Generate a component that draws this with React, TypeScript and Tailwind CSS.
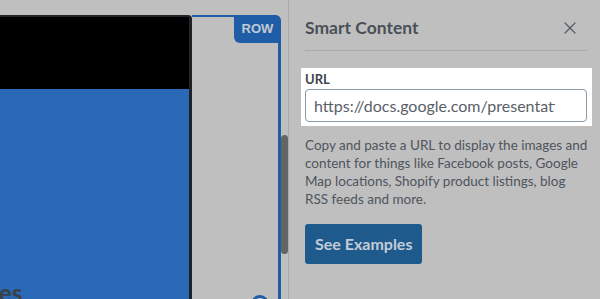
import React from 'react';
import { X } from 'lucide-react';

const sans = { fontFamily: 'Lato, "Noto Sans", sans-serif' };

function Canvas() {
  return (
    <div className="relative flex w-[288px] shrink-0 overflow-hidden">
      {/* Row column with the preview card and the row outline */}
      <div className="flex w-[281px] flex-col pt-[15px]">
        <div className="flex flex-1">
          {/* Dark card frame */}
          <div className="flex w-[192px] flex-col rounded-tr-[4px] border-t-2 border-r-[3px] border-[#1f2328]">
            <div className="h-[72px] bg-black" />
            <div className="flex-1 bg-[#2969b5]" />
          </div>
          {/* Row outline */}
          <div className="relative flex-1 rounded-tr-[6px] border-t-2 border-r-[3px] border-[#1f5ea6]">
            <div
              className="absolute -top-[2px] -right-[3px] flex h-[28px] w-[47px] items-center justify-center rounded-tr-[6px] rounded-bl-[6px] bg-[#1f5ea6] text-[13px] font-bold text-[#c2cad3]"
              style={{ fontFamily: '"Liberation Sans", Arial, sans-serif' }}
            >
              ROW
            </div>
            <div className="absolute left-[59px] top-[278px] h-[18px] w-[18px] rounded-full border-[3px] border-[#1f5ea6] bg-[#c9c9c9]" />
          </div>
        </div>
      </div>
      {/* Scrollbar */}
      <div className="w-[7px]">
        <div className="mt-[135px] h-[119px] rounded-full bg-[#646464]" />
      </div>
      <span
        className="absolute left-[-1px] top-[275px] text-[24px] font-bold text-[#3b4048]"
        style={sans}
      >
        es
      </span>
    </div>
  );
}

function SmartContentPanel() {
  return (
    <div className="min-w-0 flex-1 border-l border-[#a9a9a9] pr-[13px] pl-4" style={sans}>
      <div className="flex h-[51px] items-center justify-between border-b border-[#aaaaaa] pt-[6px]">
        <h2 className="text-[17.5px] font-bold text-[#4a5058]">Smart Content</h2>
        <X className="mr-[7px] h-[20px] w-[20px] text-[#555c64]" strokeWidth={1.5} />
      </div>

      <div className="-mr-[5px] -ml-[4px] mt-[17px] bg-white pt-[3px] pr-[5px] pb-[4px] pl-[4px]">
        <label className="block text-[13px] leading-[17px] font-bold text-[#3f4650]">URL</label>
        <div className="mt-[1px] flex h-[33px] items-center rounded-[4px] border border-[#8b9aa7] pr-[31px] pl-[8px]">
          <div className="min-w-0 flex-1 overflow-hidden whitespace-nowrap text-[16px] text-[#5a6068]">
            https://docs.google.com/presentation/d/1x9
          </div>
        </div>
      </div>

      <p className="mt-[10px] whitespace-nowrap text-[13.5px] leading-[18px] text-[#4e555d]">
        Copy and paste a URL to display the images and
        <br />
        content for things like Facebook posts, Google
        <br />
        Map locations, Shopify product listings, blog
        <br />
        RSS feeds and more.
      </p>

      <button className="mt-[16px] h-[40px] rounded-[3px] bg-[#1f5a8d] px-[10px] text-[16px] font-bold text-[#c3ccd6]">
        See Examples
      </button>
    </div>
  );
}

export default function App() {
  return (
    <div className="flex h-[299px] w-[600px] overflow-hidden bg-[#bfbfbf]">
      <Canvas />
      <SmartContentPanel />
    </div>
  );
}
